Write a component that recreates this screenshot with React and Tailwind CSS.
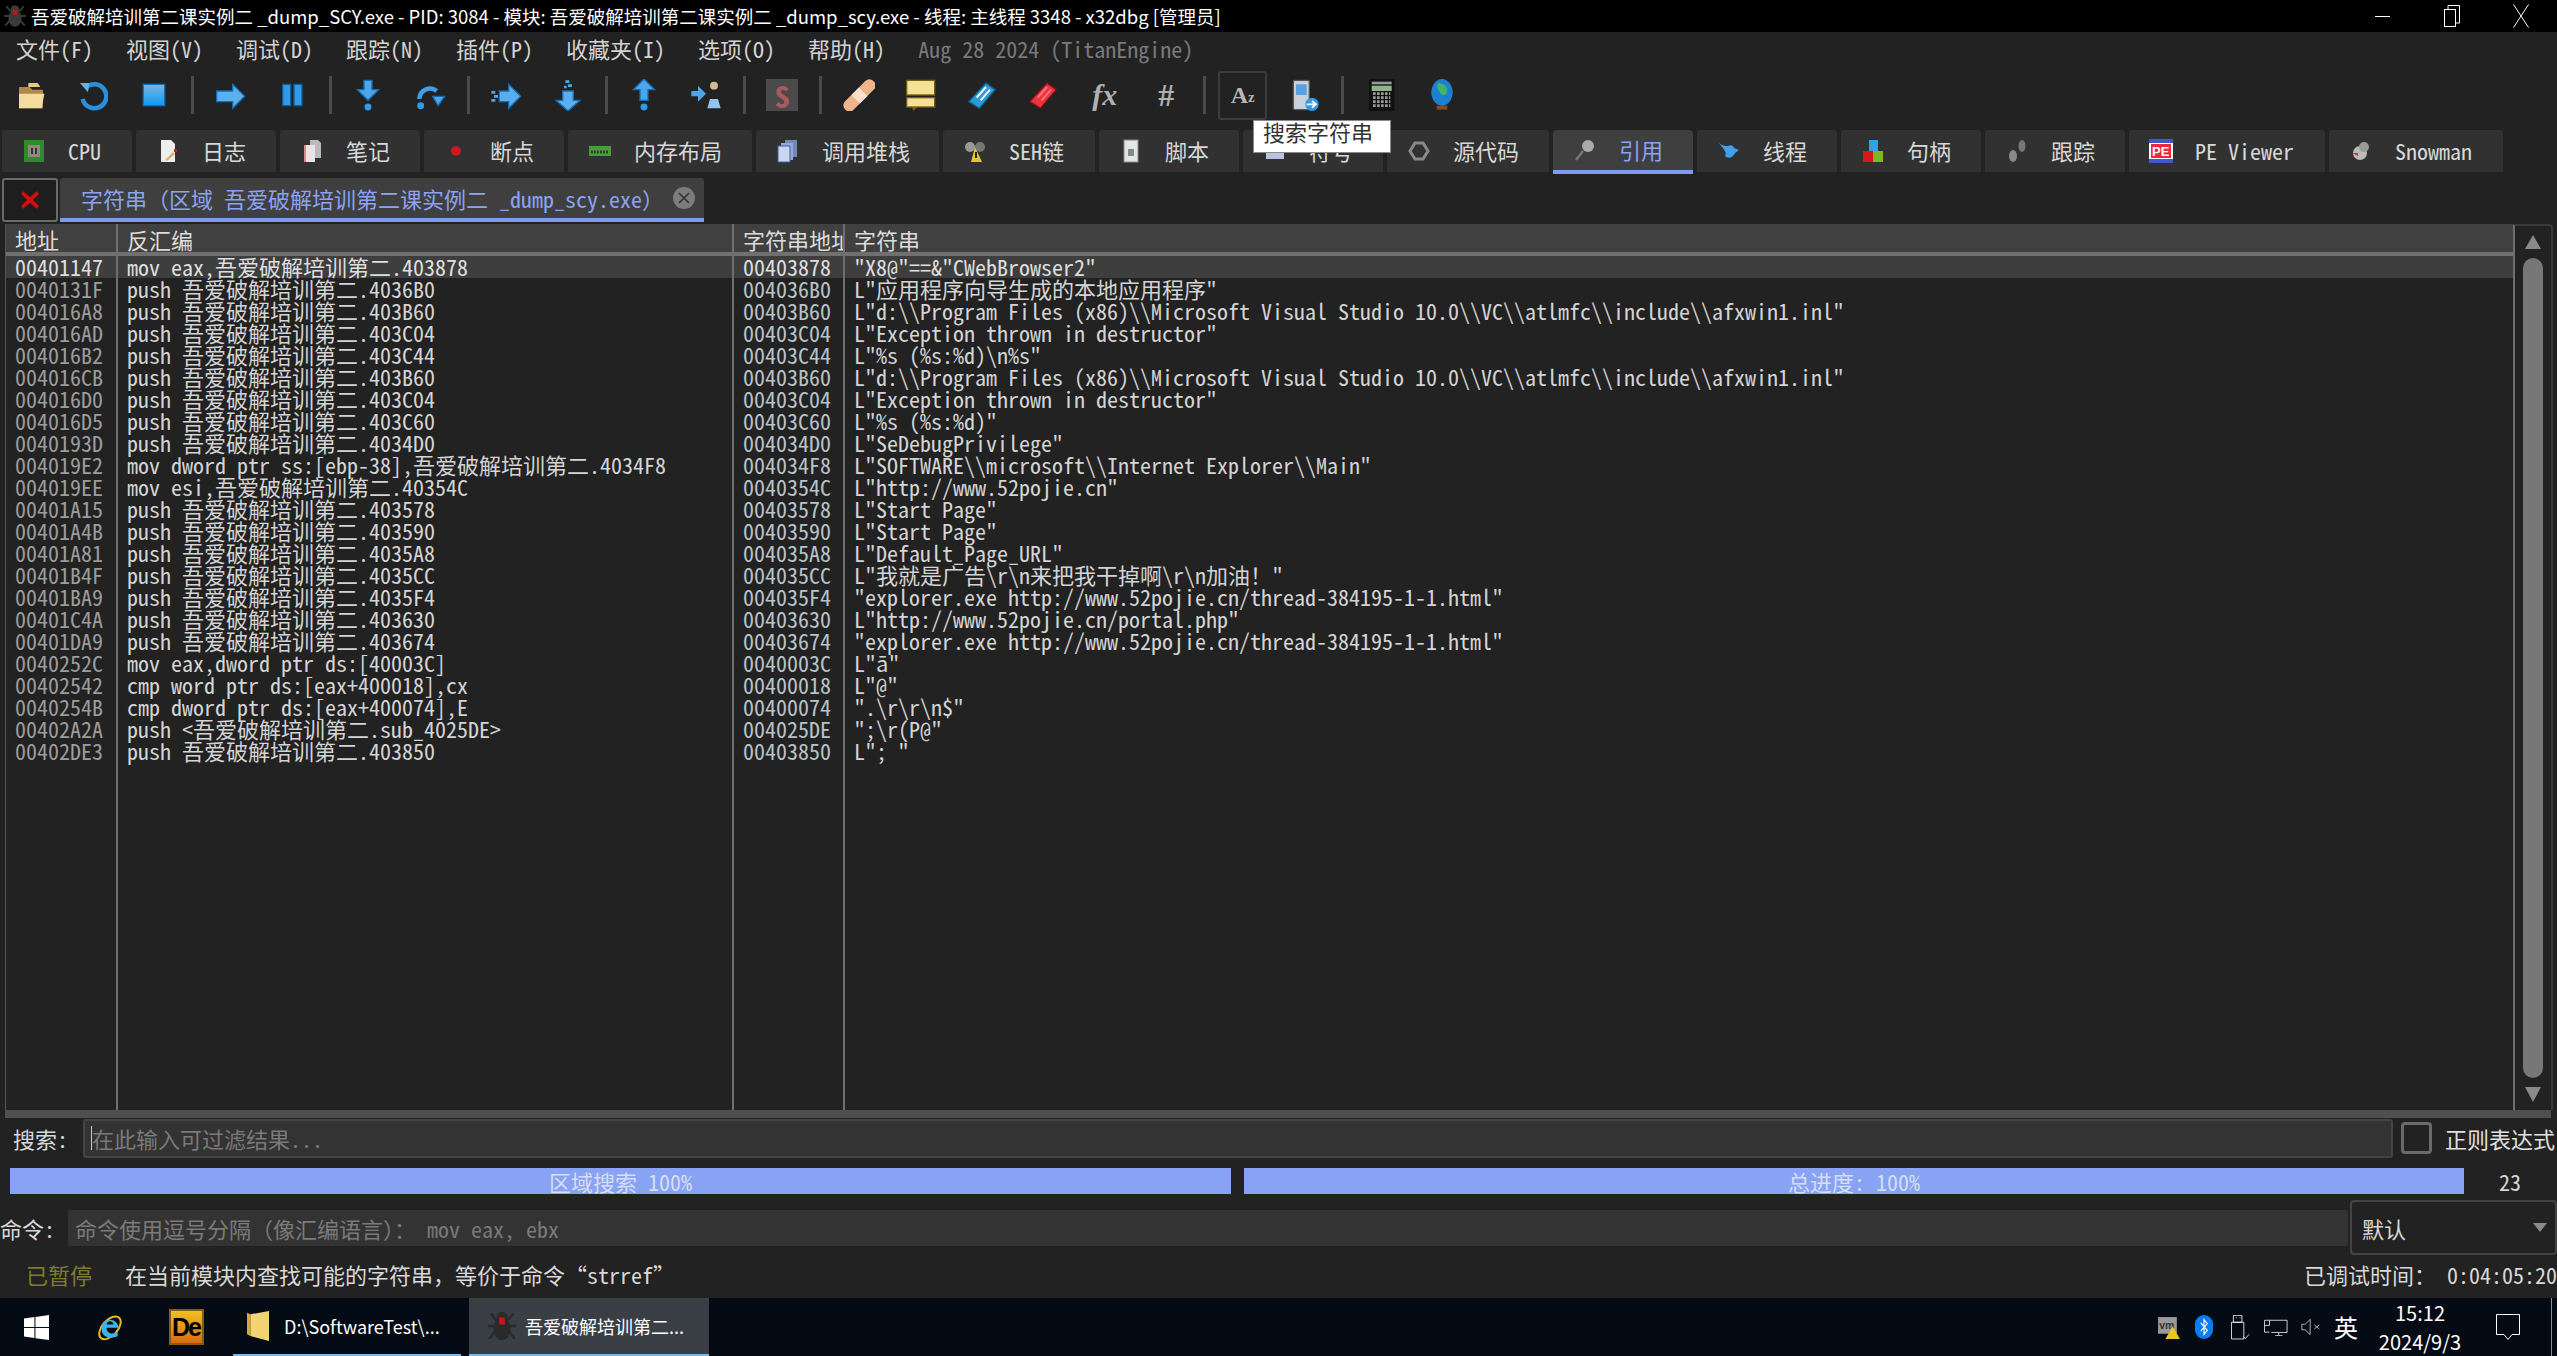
const BLUE = '#2f9be8'
const P = '吾爱破解培训第二'

const rows = [
  ['00401147', `mov eax,${P}.403878`, '00403878', '"X8@"==&"CWebBrowser2"'],
  ['0040131F', `push ${P}.4036B0`, '004036B0', 'L"应用程序向导生成的本地应用程序"'],
  ['004016A8', `push ${P}.403B60`, '00403B60', 'L"d:\\\\Program Files (x86)\\\\Microsoft Visual Studio 10.0\\\\VC\\\\atlmfc\\\\include\\\\afxwin1.inl"'],
  ['004016AD', `push ${P}.403C04`, '00403C04', 'L"Exception thrown in destructor"'],
  ['004016B2', `push ${P}.403C44`, '00403C44', 'L"%s (%s:%d)\\n%s"'],
  ['004016CB', `push ${P}.403B60`, '00403B60', 'L"d:\\\\Program Files (x86)\\\\Microsoft Visual Studio 10.0\\\\VC\\\\atlmfc\\\\include\\\\afxwin1.inl"'],
  ['004016D0', `push ${P}.403C04`, '00403C04', 'L"Exception thrown in destructor"'],
  ['004016D5', `push ${P}.403C60`, '00403C60', 'L"%s (%s:%d)"'],
  ['0040193D', `push ${P}.4034D0`, '004034D0', 'L"SeDebugPrivilege"'],
  ['004019E2', `mov dword ptr ss:[ebp-38],${P}.4034F8`, '004034F8', 'L"SOFTWARE\\\\microsoft\\\\Internet Explorer\\\\Main"'],
  ['004019EE', `mov esi,${P}.40354C`, '0040354C', 'L"http://www.52pojie.cn"'],
  ['00401A15', `push ${P}.403578`, '00403578', 'L"Start Page"'],
  ['00401A4B', `push ${P}.403590`, '00403590', 'L"Start Page"'],
  ['00401A81', `push ${P}.4035A8`, '004035A8', 'L"Default_Page_URL"'],
  ['00401B4F', `push ${P}.4035CC`, '004035CC', 'L"我就是广告\\r\\n来把我干掉啊\\r\\n加油！"'],
  ['00401BA9', `push ${P}.4035F4`, '004035F4', '"explorer.exe http://www.52pojie.cn/thread-384195-1-1.html"'],
  ['00401C4A', `push ${P}.403630`, '00403630', 'L"http://www.52pojie.cn/portal.php"'],
  ['00401DA9', `push ${P}.403674`, '00403674', '"explorer.exe http://www.52pojie.cn/thread-384195-1-1.html"'],
  ['0040252C', 'mov eax,dword ptr ds:[40003C]', '0040003C', 'L"ā"'],
  ['00402542', 'cmp word ptr ds:[eax+400018],cx', '00400018', 'L"@"'],
  ['0040254B', 'cmp dword ptr ds:[eax+400074],E', '00400074', '".\\r\\r\\n$"'],
  ['00402A2A', `push <${P}.sub_4025DE>`, '004025DE', '";\\r(P@"'],
  ['00402DE3', `push ${P}.403850`, '00403850', 'L"; "'],
]

function Ico({ children, size = 24, className = '' }) {
  return (
    <svg width={size} height={size} viewBox="0 0 24 24" className={`shrink-0 ${className}`}>
      {children}
    </svg>
  )
}

const Spider = ({ size = 24, color = '#3a3a3a' }) => (
  <Ico size={size}>
    <g stroke={color} strokeWidth="1.8" fill="none">
      <path d="M8 8 4 3M16 8l4-5M7 12H2M17 12h5M7 16l-4 5M17 16l4 5" />
    </g>
    <ellipse cx="12" cy="14" rx="6" ry="8" fill={color} />
    <circle cx="12" cy="6" r="4" fill={color} />
    <rect x="10" y="6" width="4" height="5" fill="#c01818" />
  </Ico>
)

const icons = {
  folder: (
    <Ico size={32}>
      <path d="M3 6h8l2 2h8v14H3z" fill="#b08a48" />
      <path d="M3 11h19l-2 11H3z" fill="#f3dc9c" />
      <path d="M10 3h7l2 3H10z" fill="#e6c88a" />
    </Ico>
  ),
  restart: (
    <Ico size={32}>
      <path d="M7 7a9 9 0 1 1-2 8" fill="none" stroke="#2b8fdc" strokeWidth="3.4" />
      <path d="M3 3h7l-1 7z" fill="#5fb4f0" />
    </Ico>
  ),
  stop: (
    <Ico size={32}>
      <defs>
        <linearGradient id="stopfill" x1="0" y1="0" x2="0" y2="1">
          <stop offset="0" stopColor="#7ab4e4" />
          <stop offset="1" stopColor="#0f9bf2" />
        </linearGradient>
      </defs>
      <rect x="4" y="4" width="16" height="16" fill="url(#stopfill)" stroke="#1070b8" />
    </Ico>
  ),
  run: (
    <Ico size={32}>
      <path d="M2 9h12V4l9 9-9 9v-5H2z" fill="#5cb0ee" stroke="#1a6cb0" />
    </Ico>
  ),
  pause: (
    <Ico size={32}>
      <rect x="5" y="4" width="6" height="16" fill={BLUE} stroke="#135c96" />
      <rect x="13.5" y="4" width="6" height="16" fill={BLUE} stroke="#135c96" />
    </Ico>
  ),
  stepIn: (
    <Ico size={32}>
      <path d="M9 1h6v7h5l-8 8-8-8h5z" fill="#4ba6ea" stroke="#1a6cb0" />
      <circle cx="12" cy="21" r="2.6" fill={BLUE} />
    </Ico>
  ),
  stepOver: (
    <Ico size={32}>
      <path d="M4 15a8 8 0 0 1 13-6" fill="none" stroke="#3c9fe8" strokeWidth="3.4" />
      <path d="M14 13h9l-5 7z" fill="#4ba6ea" stroke="#1a6cb0" />
      <circle cx="5" cy="20" r="2.6" fill={BLUE} />
    </Ico>
  ),
  runSkip: (
    <Ico size={32}>
      <path d="M7 9h7V4l9 9-9 9v-5H7z" fill="#58aeee" stroke="#1a6cb0" />
      <path d="M1 9h3v2H1zM3 12h3v2H3zM1 15h3v2H1z" fill="#4ba6ea" />
    </Ico>
  ),
  traceDown: (
    <Ico size={32}>
      <path d="M8 9h8v7h5l-9 8-9-8h5z" fill="#58aeee" stroke="#1a6cb0" />
      <path d="M10 1h3v2h-3zM12 4h3v2h-3zM9 5h2v2H9z" fill="#4ba6ea" />
    </Ico>
  ),
  stepOut: (
    <Ico size={32}>
      <path d="M9 16h6V8h5l-8-8-8 8h5z" fill="#4ba6ea" stroke="#1a6cb0" />
      <circle cx="12" cy="21" r="2.6" fill={BLUE} />
    </Ico>
  ),
  toUser: (
    <Ico size={32}>
      <path d="M1 9h5V5l6 6-6 6v-4H1z" fill="#4ba6ea" />
      <circle cx="18" cy="5" r="3" fill="#d8b898" />
      <path d="M17 8h2v7h-2z" fill="#222" />
      <path d="M13 22l2-7h6l2 7z" fill="#8fc4ee" />
    </Ico>
  ),
  script: (
    <div className="w-[32px] h-[32px] bg-[#4a4a4a] flex items-center justify-center">
      <span className="text-[#a85a60] font-bold text-[30px] leading-none">S</span>
    </div>
  ),
  patch: (
    <Ico size={32}>
      <rect x="-3" y="8" width="30" height="9" rx="4" transform="rotate(-45 12 12)" fill="#eeb48c" />
      <rect x="8" y="8" width="8" height="9" transform="rotate(-45 12 12)" fill="#fbe0cc" />
    </Ico>
  ),
  comment: (
    <Ico size={32}>
      <rect x="2" y="1" width="21" height="11" fill="#f2e294" stroke="#7b5a14" />
      <rect x="2" y="14" width="21" height="7" fill="#f2e294" stroke="#7b5a14" />
      <path d="M6 21h4l-3 3z" fill="#7b5a14" />
    </Ico>
  ),
  label: (
    <Ico size={32}>
      <path d="M2 17 15 3l7 5-12 14z" fill="#2a9ad8" stroke="#0d5b80" />
      <path d="M8 14l7-8M11 16l7-8" stroke="#e8f4fb" strokeWidth="1.6" />
    </Ico>
  ),
  bookmark: (
    <Ico size={32}>
      <path d="M2 17 15 3l7 5-12 14z" fill="#e8343c" stroke="#7a1018" />
      <path d="M8 14l7-8M11 16l7-8" stroke="#ff7078" strokeWidth="1.6" />
    </Ico>
  ),
}

const TextIcon = ({ children, className }) => (
  <span className={`font-['Liberation_Serif',serif] font-bold text-[#b0b0b0] leading-none ${className}`}>{children}</span>
)

const phone = (
  <Ico size={32}>
    <rect x="4" y="1" width="12" height="22" rx="1" fill="#c8d0d8" stroke="#555" />
    <rect x="6" y="4" width="8" height="8" fill="#5aa0e0" />
    <circle cx="18" cy="19" r="5" fill="#2f9be8" />
    <path d="M14 19h6M18 16.5l3 2.5-3 2.5" stroke="#fff" fill="none" strokeWidth="1.3" />
  </Ico>
)
const calc = (
  <Ico size={32}>
    <rect x="3" y="0" width="19" height="24" fill="#111" />
    <rect x="5" y="2" width="15" height="2" fill="#999" />
    <rect x="5" y="5" width="15" height="4" fill="#8fb48c" />
    <path d="M6 11h13M6 14h13M6 17h13M6 20h13" stroke="#999" strokeWidth="2" strokeDasharray="2 1" />
  </Ico>
)
const globe = (
  <Ico size={32}>
    <ellipse cx="12" cy="10" rx="8" ry="10" fill="#1c7fd0" />
    <path d="M9 3c5 0 7 3 7 6s-4 4-5 2-4-5-2-8z" fill="#3fb46c" />
    <rect x="8" y="20" width="8" height="3" fill="#8a4a20" />
  </Ico>
)

const toolbar = [
  icons.folder, icons.restart, icons.stop, null,
  icons.run, icons.pause, null,
  icons.stepIn, icons.stepOver, null,
  icons.runSkip, icons.traceDown, null,
  icons.stepOut, icons.toUser, null,
  icons.script, null,
  icons.patch, icons.comment, icons.label, icons.bookmark,
  <TextIcon className="italic text-[30px]">fx</TextIcon>,
  <TextIcon className="text-[32px]">#</TextIcon>,
  null,
  'az',
  phone, null,
  calc, globe,
]

const tabIcons = {
  cpu: (
    <Ico>
      <rect x="2" y="1" width="20" height="22" fill="#2f8a2c" />
      <rect x="6" y="6" width="12" height="12" fill="#8a8a80" />
      <path d="M9 9h2v6H9zM13 9h2v6h-2z" fill="#333" />
    </Ico>
  ),
  log: (
    <Ico>
      <path d="M5 1h10l4 4v18H5z" fill="#eee" />
      <path d="M9 21l8-8 2 2-8 7z" fill="#d4b860" />
      <rect x="18" y="10" width="3" height="3" fill="#c02020" />
    </Ico>
  ),
  notes: (
    <Ico>
      <path d="M10 1h8l3 3v15H10z" fill="#bbb" />
      <path d="M4 6h11v17H4z" fill="#e8e4ea" />
      <path d="M4 6h2v17H4z" fill="#d88" />
    </Ico>
  ),
  bp: (
    <Ico>
      <circle cx="12" cy="12" r="5" fill="#c81820" />
    </Ico>
  ),
  mem: (
    <Ico>
      <rect x="1" y="7" width="22" height="10" fill="#4c9a3c" />
      <path d="M3 13h18" stroke="#1e4e18" strokeWidth="3" strokeDasharray="2 1" />
    </Ico>
  ),
  stack: (
    <Ico>
      <rect x="9" y="1" width="12" height="17" fill="#7288b8" />
      <rect x="5" y="4" width="12" height="17" fill="#95aad8" />
      <rect x="2" y="7" width="12" height="16" fill="#c8d6f0" stroke="#3f5db0" />
    </Ico>
  ),
  seh: (
    <Ico>
      <circle cx="7" cy="8" r="5" fill="#999" />
      <circle cx="17" cy="8" r="5" fill="#777" />
      <path d="M12 8l7 15H8z" fill="#e0c820" />
      <rect x="12" y="13" width="2" height="6" fill="#222" />
    </Ico>
  ),
  script: (
    <Ico>
      <rect x="5" y="1" width="14" height="22" fill="#dfe8e4" stroke="#888" />
      <rect x="9" y="10" width="6" height="7" fill="#888" />
    </Ico>
  ),
  symbol: (
    <Ico>
      <rect x="3" y="8" width="18" height="12" fill="#b8c4de" />
    </Ico>
  ),
  source: (
    <Ico>
      <path d="M8 4h8l5 8-5 8H8l-5-8z" fill="none" stroke="#8a8a8a" strokeWidth="3" />
    </Ico>
  ),
  ref: (
    <Ico>
      <circle cx="15" cy="8" r="6" fill="#aaa" />
      <path d="M10 13 3 22" stroke="#777" strokeWidth="2.4" />
    </Ico>
  ),
  thread: (
    <Ico>
      <path d="M1 3c4 4 6 4 10 4 3-2 6 0 6 2l5 2-4 3c-2 5-7 6-10 3 2-3 0-6-7-14z" fill="#3ea2ee" />
    </Ico>
  ),
  handle: (
    <Ico>
      <rect x="8" y="1" width="9" height="11" fill="#2ea4e0" />
      <rect x="2" y="12" width="10" height="11" fill="#d81818" />
      <rect x="12" y="12" width="10" height="11" fill="#7ab828" />
    </Ico>
  ),
  trace: (
    <Ico>
      <ellipse cx="8" cy="17" rx="4" ry="6" fill="#888" />
      <ellipse cx="17" cy="7" rx="3.5" ry="6" fill="#777" />
    </Ico>
  ),
  pe: (
    <Ico>
      <rect x="0" y="0" width="24" height="24" fill="#fff" />
      <rect x="0" y="0" width="24" height="4" fill="#4058c8" />
      <rect x="0" y="20" width="24" height="4" fill="#4058c8" />
      <rect x="2" y="5" width="20" height="14" fill="#ee2838" />
      <text x="3" y="17" fontSize="13" fontWeight="bold" fill="#fff" fontFamily="Liberation Sans">PE</text>
    </Ico>
  ),
  snow: (
    <Ico>
      <circle cx="11" cy="14" r="7" fill="#bbb" />
      <circle cx="15" cy="8" r="5" fill="#999" />
      <path d="M3 14h6v3z" fill="#d03030" />
    </Ico>
  ),
}

const tabs = [
  ['cpu', 'CPU', 'w-[130px]'],
  ['log', '日志', 'w-[140px]'],
  ['notes', '笔记', 'w-[140px]'],
  ['bp', '断点', 'w-[140px]'],
  ['mem', '内存布局', 'w-[184px]'],
  ['stack', '调用堆栈', 'w-[183px]'],
  ['seh', 'SEH链', 'w-[152px]'],
  ['script', '脚本', 'w-[140px]'],
  ['symbol', '符号', 'w-[140px]'],
  ['source', '源代码', 'w-[162px]'],
  ['ref', '引用', 'w-[140px]', true],
  ['thread', '线程', 'w-[140px]'],
  ['handle', '句柄', 'w-[140px]'],
  ['trace', '跟踪', 'w-[140px]'],
  ['pe', 'PE Viewer', 'w-[196px]'],
  ['snow', 'Snowman', 'w-[174px]'],
]

const menus = ['文件(F)', '视图(V)', '调试(D)', '跟踪(N)', '插件(P)', '收藏夹(I)', '选项(O)', '帮助(H)']

function Column({ title, width, cell, textClass, last }) {
  return (
    <div className={`${width} flex flex-col min-h-0 overflow-hidden ${last ? '' : 'border-r-2 border-[#6e6e6e]'}`}>
      <div className="h-[32px] shrink-0 bg-[#404040] border-b-4 border-[#707070] pl-[9px] pt-[4px] text-[#dcdcdc] whitespace-pre overflow-hidden">
        {title}
      </div>
      {rows.map((r, i) => (
        <div key={i} className={`h-[22px] shrink-0 leading-[20px] whitespace-pre pl-[9px] ${i === 0 ? 'bg-[#3e3e3e] text-[#dedede]' : textClass}`}>
          {r[cell]}
        </div>
      ))}
    </div>
  )
}

export default function App() {
  return (
    <div className="relative w-[2557px] h-[1356px] flex flex-col overflow-hidden bg-[#222222] text-[22px] leading-[22px] text-[#d8d8d8] font-['Noto_Sans_Mono_CJK_SC','Liberation_Mono','Noto_Sans_CJK_SC',monospace]">
      {/* title bar */}
      <div className="h-[32px] shrink-0 bg-black flex items-center text-white">
        <div className="w-[31px] pl-[2px]"><Spider size={26} /></div>
        <span className="text-[18.5px] font-['Noto_Sans_CJK_SC',sans-serif] whitespace-pre">吾爱破解培训第二课实例二 _dump_SCY.exe - PID: 3084 - 模块: 吾爱破解培训第二课实例二 _dump_scy.exe - 线程: 主线程 3348 - x32dbg [管理员]</span>
        <div className="ml-auto flex items-center">
          <div className="w-[69px] flex justify-center"><div className="w-[15px] h-px bg-white" /></div>
          <div className="w-[69px] flex justify-center">
            <svg width="16" height="24" viewBox="0 0 16 24" fill="none" stroke="#fff">
              <rect x="0.5" y="5.5" width="11" height="17" />
              <path d="M4 5V1.5h11.5V19H12" />
            </svg>
          </div>
          <div className="w-[71px] pr-[1px] flex justify-center">
            <svg width="16" height="24" viewBox="0 0 16 24" stroke="#fff" fill="none"><path d="m0.5 0.5 15 23M15.5 0.5l-15 23" /></svg>
          </div>
        </div>
      </div>

      {/* menu */}
      <div className="h-[32px] shrink-0 flex items-center pl-[16px] gap-[33px] text-[#d4d4d4]">
        {menus.map((m) => <span key={m}>{m}</span>)}
        <span className="text-[#7a7a7a]">Aug 28 2024 (TitanEngine)</span>
      </div>

      {/* toolbar */}
      <div className="h-[62px] shrink-0 flex items-center">
        {toolbar.map((t, i) => {
          if (t === null) return <div key={i} className="w-[15px] flex justify-center"><div className="w-[3px] h-[38px] bg-[#4a4a4a]" /></div>
          if (t === 'az') {
            return (
              <div key={i} className="w-[61.5px] flex justify-center">
                <div className="w-[49px] h-[49px] border-2 border-[#3c3c3c] rounded-[3px] flex items-center justify-center font-['Liberation_Serif',serif] font-bold text-[#b8b8b8]">
                  <span className="text-[24px]">A</span><span className="text-[15px] mt-[4px]">z</span>
                </div>
              </div>
            )
          }
          return <div key={i} className="w-[61.5px] h-[52px] flex items-center justify-center">{t}</div>
        })}
      </div>

      {/* view tabs */}
      <div className="h-[44px] mt-[4px] shrink-0 flex items-start gap-[4px] pl-[2px]">
        {tabs.map(([ic, label, w, active]) => (
          <div key={label} className={`${w} flex items-center pl-[20px] gap-[22px] rounded-t-[4px] ${active ? 'h-[44px] bg-[#3f3f3f] border-b-4 border-[#7f9bf0] text-[#8ba3f2]' : 'h-[42px] bg-[#313131] text-[#d8d8d8]'}`}>
            {tabIcons[ic]}
            <span className="whitespace-pre mb-[2px]">{label}</span>
          </div>
        ))}
      </div>

      {/* references tab */}
      <div className="h-[44px] mt-[4px] shrink-0 flex items-stretch gap-[2px] pl-[2px]">
        <div className="w-[56px] border-2 border-[#6a6a6a] rounded-[3px] bg-[#1e1e1e] flex items-center justify-center">
          <svg width="20" height="22" viewBox="0 0 20 22"><path d="M3 2l7 6 7-6 2 3-6 6 6 6-2 3-7-6-7 6-2-3 6-6-6-6z" fill="#d01010" stroke="#701010" /></svg>
        </div>
        <div className="w-[644px] bg-[#3f3f3f] border-b-4 border-[#7f9bf0] rounded-t-[3px] flex items-center pl-[21px] text-[#8ba3f2]">
          <span className="whitespace-pre">字符串（区域 吾爱破解培训第二课实例二 _dump_scy.exe）</span>
          <div className="ml-auto mr-[9px] w-[22px] h-[22px] rounded-full bg-[#7c7c7c] flex items-center justify-center">
            <svg width="12" height="12" viewBox="0 0 12 12" stroke="#333" strokeWidth="1.6"><path d="m1 1 10 10M11 1 1 11" /></svg>
          </div>
        </div>
      </div>

      {/* table */}
      <div className="mt-[2px] ml-[5px] mr-[4px] h-[894px] shrink-0 flex flex-col">
        <div className="flex-1 min-h-0 flex">
          <div className="flex-1 min-w-0 flex border-l border-[#555555]">
            <Column title="地址" width="w-[112px]" cell={0} textClass="text-[#9c9c9c]" />
            <Column title="反汇编" width="w-[616px]" cell={1} textClass="text-[#d4d4d4]" />
            <Column title="字符串地址" width="w-[111px]" cell={2} textClass="text-[#b8c2c8]" />
            <Column title="字符串" width="flex-1" cell={3} textClass="text-[#d4d4d4]" last />
          </div>
          {/* scroll bar */}
          <div className="w-[40px] shrink-0 border-l-2 border-[#6e6e6e] border-r-2 border-r-[#3a3a3a] border-t-2 border-t-[#3a3a3a] rounded-tr-[4px] flex flex-col items-center pt-[9px] pb-[8px]">
            <div className="w-0 h-0 border-x-[8px] border-x-transparent border-b-[14px] border-b-[#8a8a8a]" />
            <div className="w-[20px] flex-1 mt-[9px] mb-[9px] rounded-[10px] bg-[#777777]" />
            <div className="w-0 h-0 border-x-[8px] border-x-transparent border-t-[15px] border-t-[#8a8a8a]" />
          </div>
        </div>
        <div className="h-[8px] shrink-0 bg-[#4f4f4f] mr-[2px]" />
      </div>

      {/* search */}
      <div className="h-[40px] shrink-0 flex items-center pl-[13px]">
        <span className="w-[70px] shrink-0 whitespace-pre">搜索:</span>
        <div className="h-[39px] flex-1 bg-[#333333] border-2 border-[#444444] rounded-[3px] flex items-center pl-[6px] text-[#7a7a7a]">
          <div className="w-px h-[24px] bg-[#cccccc]" />
          <span className="whitespace-pre">在此输入可过滤结果...</span>
        </div>
        <div className="w-[31px] h-[32px] ml-[8px] border-[3px] border-[#6a6a6a] rounded-[4px]" />
        <span className="ml-[13px] w-[112px] whitespace-pre text-[#e0e0e0]">正则表达式</span>
      </div>

      {/* progress */}
      <div className="h-[26px] mt-[10px] shrink-0 flex items-center pl-[10px] gap-[13px] text-[#d6def6]">
        <div className="w-[1221px] h-full bg-[#88a2f4] flex items-center justify-center whitespace-pre">区域搜索 100%</div>
        <div className="w-[1220px] h-full bg-[#88a2f4] flex items-center justify-center whitespace-pre">总进度: 100%</div>
        <span className="ml-[22px] text-[#d8d8d8]">23</span>
      </div>

      {/* command */}
      <div className="h-[55px] mt-[6px] shrink-0 flex items-center">
        <span className="w-[68px] shrink-0 whitespace-pre">命令:</span>
        <div className="h-[36px] w-[2280px] mr-[2px] bg-[#333333] rounded-[2px] flex items-center pl-[7px] text-[#7a7a7a] whitespace-pre">命令使用逗号分隔（像汇编语言）： mov eax, ebx</div>
        <div className="flex-1 h-full border-2 border-[#444444] rounded-[4px] flex items-center pl-[10px] pr-[8px] justify-between">
          <span>默认</span>
          <div className="w-0 h-0 border-x-[7px] border-x-transparent border-t-[9px] border-t-[#8a8a8a]" />
        </div>
      </div>

      {/* status */}
      <div className="h-[43px] shrink-0 flex items-center pl-[26px] pb-[5px]">
        <span className="w-[99px] text-[#7d7d2a]">已暂停</span>
        <span className="whitespace-pre">在当前模块内查找可能的字符串，等价于命令“strref”</span>
        <span className="ml-auto whitespace-pre">已调试时间： 0:04:05:20</span>
      </div>

      {/* taskbar */}
      <div className="h-[58px] shrink-0 bg-[#050b14] flex items-stretch text-white font-['Noto_Sans_CJK_SC',sans-serif] text-[18px]">
        <div className="w-[72px] flex items-center justify-center">
          <svg width="25" height="25" viewBox="0 0 24 24" fill="#fff"><path d="M0 3.4 10 2v9.5H0zM11 1.8 24 0v11.5H11zM0 12.5h10V22L0 20.6zM11 12.5h13V24l-13-1.8z" /></svg>
        </div>
        <div className="w-[76px] flex items-center justify-center">
          <svg width="34" height="34" viewBox="0 0 36 40">
            <ellipse cx="18" cy="21" rx="16" ry="9" transform="rotate(-48 18 21)" fill="none" stroke="#e8b820" strokeWidth="2.4" />
            <path d="M8 22a10 10 0 1 1 20-1H14c0 7 8 9 13 4v6c-9 4-19 1-19-9zm6-5h8c-1-5-7-5-8 0z" fill="#3cb4e8" />
          </svg>
        </div>
        <div className="w-[76px] flex items-center justify-center">
          <div className="w-[35px] h-[36px] bg-linear-to-b from-[#f0c020] to-[#d86a10] border-2 border-[#8a5a10] flex items-center justify-center text-black font-bold text-[25px] tracking-[-2px] font-['Liberation_Sans',sans-serif]">De</div>
        </div>
        <div className="w-[9px]" />
        <div className="w-[228px] border-b-2 border-[#76b9ed] flex items-center pl-[14px] gap-[15px]">
          <svg width="22" height="30" viewBox="0 0 20 36" preserveAspectRatio="none"><path d="M3 4 20 0v36L3 30z" fill="#f3d475" /><path d="M0 2l3 2v26l-3-2z" fill="#d8a73c" /></svg>
          <span className="whitespace-pre">D:\SoftwareTest\...</span>
        </div>
        <div className="w-[8px]" />
        <div className="w-[240px] bg-[#3a3f46] border-b-2 border-[#76b9ed] flex items-center pl-[16px] gap-[6px]">
          <Spider size={34} color="#2a2a2a" />
          <span className="whitespace-pre">吾爱破解培训第二...</span>
        </div>
        <div className="ml-auto flex items-center pr-[5px]">
          <div className="w-[36px] flex justify-center">
            <Ico size={25}>
              <rect x="2" y="2" width="18" height="16" fill="#999" />
              <text x="3" y="13" fontSize="10" fontWeight="bold" fill="#333" fontFamily="Liberation Sans">vm</text>
              <path d="M16 11l7 12H9z" fill="#e8c820" />
            </Ico>
          </div>
          <div className="w-[36px] flex justify-center">
            <div className="w-[18px] h-[24px] rounded-[9px] bg-[#0a7ef0] flex items-center justify-center">
              <svg width="10" height="18" viewBox="0 0 10 22" fill="none" stroke="#fff" strokeWidth="1.4"><path d="M1 6l8 9-4 5V2l4 5-8 9" /></svg>
            </div>
          </div>
          <div className="w-[36px] flex justify-center">
            <svg width="19" height="25" viewBox="0 0 20 36" preserveAspectRatio="none" fill="none" stroke="#fff"><path d="M2.5 0.5h9v10h-9zM0.5 10.5h13v24h-13zM13 31l2 3 4-6" /><path d="M5 4h1M9 4h1" /></svg>
          </div>
          <div className="w-[36px] flex justify-center">
            <svg width="24" height="18" viewBox="0 0 26 28" preserveAspectRatio="none" fill="none" stroke="#fff"><path d="M6 3.5h19v19H8M6 22H0.5V3.5H6v8H0.5M12 27.5h8M16 23v4" /></svg>
          </div>
          <div className="w-[34px] flex justify-center">
            <svg width="20" height="18" viewBox="0 0 24 26" preserveAspectRatio="none" fill="none" stroke="#ddd"><path d="M1 9h4l6-7v22l-6-7H1zM16 10l6 6M22 10l-6 6" /></svg>
          </div>
          <div className="w-[36px] text-center text-[24px]">英</div>
          <div className="w-[90px] ml-[11px] flex flex-col items-center leading-[29px] text-[20px] whitespace-pre">
            <span>15:12</span>
            <span>2024/9/3</span>
          </div>
          <div className="w-[86px] flex justify-center">
            <svg width="24" height="26" viewBox="0 0 24 26" fill="none" stroke="#fff"><path d="M0.5 0.5h23v20H16l-4 5-4-5H0.5z" /></svg>
          </div>
          <div className="w-px h-full bg-[#8a9098]" />
        </div>
      </div>

      {/* tooltip */}
      <div className="absolute left-[1253px] top-[120px] w-[138px] h-[33px] bg-white border border-[#8a8a8a] pl-[9px] leading-[20px] text-[#333333] whitespace-pre">搜索字符串</div>
    </div>
  )
}
